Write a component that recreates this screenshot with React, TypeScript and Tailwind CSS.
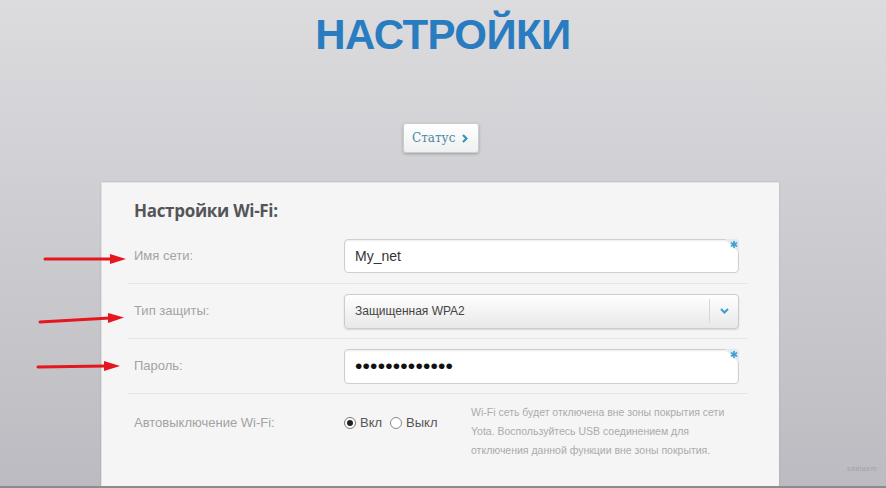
const Corner = () => (
  <svg className="absolute -right-[1px] -top-[1px]" width="14" height="14" viewBox="0 0 14 14">
    <path d="M0 0 H10 Q14 0 14 4 V14 Z" fill="#e3e9ed" />
    <g stroke="#3a9fd0" strokeWidth="1.6" strokeLinecap="round">
      <line x1="9" y1="2.5" x2="9" y2="8.5" />
      <line x1="6.4" y1="4" x2="11.6" y2="7" />
      <line x1="6.4" y1="7" x2="11.6" y2="4" />
    </g>
  </svg>
);

const Row = ({ label, children, last }: { label: string; children: React.ReactNode; last?: boolean }) => (
  <div className={`flex items-center h-[55px] ${last ? "" : "border-b border-[#e6e6e6]"}`}>
    <div className="w-[216px] pl-[6px] text-[13px] text-[#a3a3a3]">{label}</div>
    {children}
  </div>
);

const Arrows = () => (
  <svg className="absolute left-0 top-0 pointer-events-none" width="140" height="488">
    <g stroke="#e5161d" strokeWidth="3" strokeLinecap="round">
      <line x1="45" y1="259" x2="112" y2="259" />
      <line x1="40" y1="322" x2="110" y2="318" />
      <line x1="38" y1="367" x2="106" y2="366" />
    </g>
    <g fill="#e5161d">
      <path d="M110 254 L126 259 L110 264 Z" />
      <path d="M108 313 L124 317.5 L108 323 Z" />
      <path d="M104 361 L120 366 L104 371 Z" />
    </g>
  </svg>
);

export default function App() {
  return (
    <div className="relative w-[886px] h-[488px] overflow-hidden flex flex-col bg-linear-to-b from-[#dcdcdf] to-[#bcbbc1] font-['Liberation_Sans',Arial,sans-serif]">
      <div className="pt-[14px] h-[55px] flex justify-center">
        <h1 className="text-[42px] leading-[42px] font-bold text-[#2a7cc0] tracking-[-0.6px]">НАСТРОЙКИ</h1>
      </div>

      <div className="mt-[68px] flex justify-center pr-[4px]">
        <div className="flex items-center justify-between w-[76px] h-[30px] pl-[8px] pr-[10px] rounded-[3px] border border-[#c9cdd1] bg-linear-to-b from-white to-[#eef0f1] shadow-[0_1px_3px_rgba(0,0,0,0.25)]">
          <span className="font-['DejaVu_Serif','Liberation_Serif',serif] text-[12px] text-[#4d86a2]">Статус</span>
          <svg width="6" height="9" viewBox="0 0 6 9">
            <path d="M1 1 L4.5 4.5 L1 8" stroke="#2f8fba" strokeWidth="2" fill="none" />
          </svg>
        </div>
      </div>

      <div className="mt-[29px] ml-[101px] w-[678px] flex-1 bg-[#f5f5f5] border-l border-t border-[#e2e2e4] shadow-[0_0_2px_rgba(0,0,0,0.12)] pt-[16px] pl-[26px] pr-[31px]">
        <div className="pl-[6px] h-[24px] leading-[24px] text-[17px] font-bold text-[#555558] font-['Open_Sans','Liberation_Sans',sans-serif] tracking-[-0.3px]">
          Настройки Wi-Fi:
        </div>
        <div className="mt-[6px]">
          <Row label="Имя сети:">
            <div className="relative w-[395px] h-[34px] rounded-[4px] border border-[#cfcfcf] bg-white shadow-[inset_0_1px_2px_rgba(0,0,0,0.08)] flex items-center pl-[10px] text-[14px] text-[#333]">
              My_net
              <Corner />
            </div>
          </Row>
          <Row label="Тип защиты:">
            <div className="w-[395px] h-[35px] rounded-[4px] border border-[#cbcbcb] bg-linear-to-b from-white to-[#e8e8e8] shadow-[0_1px_2px_rgba(0,0,0,0.12)] flex items-center text-[12px] text-[#444]">
              <span className="flex-1 pl-[10px]">Защищенная WPA2</span>
              <div className="h-[24px] w-[29px] border-l border-[#d6d6d6] flex items-center justify-center">
                <svg width="9" height="6" viewBox="0 0 9 6">
                  <path d="M1 1 L4.5 4.5 L8 1" stroke="#3a9fd0" strokeWidth="2" fill="none" />
                </svg>
              </div>
            </div>
          </Row>
          <Row label="Пароль:">
            <div className="relative w-[395px] h-[35px] rounded-[4px] border border-[#cfcfcf] bg-white shadow-[inset_0_1px_2px_rgba(0,0,0,0.08)] flex items-center pl-[10px] text-[21px] tracking-[0.2px] text-[#111]">
              •••••••••••••
              <Corner />
            </div>
          </Row>
          <div className="flex items-start pt-[9px]">
            <div className="w-[216px] pl-[6px] pt-[10px] text-[13px] text-[#a3a3a3]">Автовыключение Wi-Fi:</div>
            <div className="w-[127px] flex items-center gap-[4px] pt-[10px] text-[13px] text-[#555]">
              <span className="w-[12px] h-[12px] rounded-full border border-[#777] bg-white flex items-center justify-center">
                <span className="w-[6px] h-[6px] rounded-full bg-[#222]" />
              </span>
              <span>Вкл</span>
              <span className="ml-[4px] w-[12px] h-[12px] rounded-full border border-[#8a8a8a] bg-white" />
              <span>Выкл</span>
            </div>
            <div className="text-[10.5px] leading-[19px] text-[#ababab]">
              Wi-Fi сеть будет отключена вне зоны покрытия сети
              <br />
              Yota. Воспользуйтесь USB соединением для
              <br />
              отключения данной функции вне зоны покрытия.
            </div>
          </div>
        </div>
      </div>
      <div className="h-[2px] bg-[#8c8b90]" />

      <Arrows />
      <span className="absolute right-[9px] bottom-[14px] text-[7px] text-[#a2a1a6] tracking-[0.5px]">sdelaem</span>
    </div>
  );
}
